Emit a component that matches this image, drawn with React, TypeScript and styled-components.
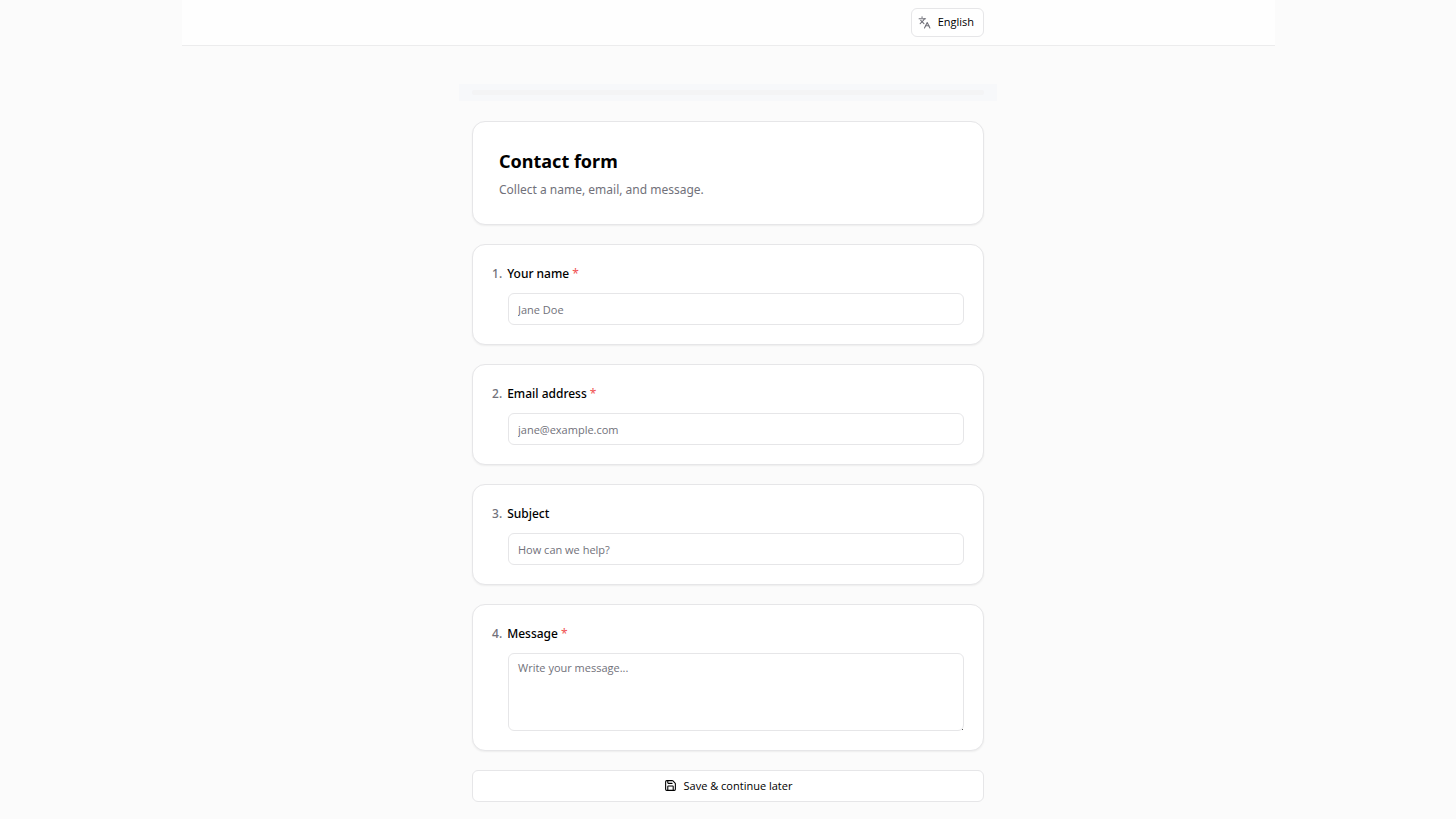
import React from "react";
import styled, { createGlobalStyle } from "styled-components";
import { Languages, Save } from "lucide-react";

const GlobalStyle = createGlobalStyle`
  * { box-sizing: border-box; }
  body {
    margin: 0;
    background: #fbfbfb;
    color: #000;
    font-family: "Segoe UI", "Noto Sans", "Open Sans", sans-serif;
  }
  button, input, textarea { font-family: "Segoe UI", "Open Sans", "Noto Sans", sans-serif; color: inherit; }
`;

const Header = styled.header`
  max-width: 1093px;
  margin: 0 auto;
  padding: 8px 0;
  background: #fefefe;
  border-bottom: 1px solid #ececed;
`;

const HeaderInner = styled.div`
  max-width: 512px;
  margin: 0 auto;
  display: flex;
  justify-content: flex-end;
`;

const LanguageButton = styled.button`
  display: flex;
  align-items: center;
  gap: 7px;
  height: 29px;
  padding: 0 9px 1px 6px;
  border: 1px solid #e6e6e8;
  border-radius: 6px;
  background: #fff;
  font-size: 11px;
  line-height: 16px;

  svg { color: #71717a; }
`;

const Main = styled.main`
  max-width: 538px;
  margin: 0 auto;
  padding: 38px 0 17px;
`;

const ProgressStrip = styled.div`
  padding: 6px 13px;
  background: #f7f8fa;
`;

const ProgressTrack = styled.div`
  height: 5px;
  border-radius: 2px;
  background: #f4f4f5;
`;

const Form = styled.form`
  display: flex;
  flex-direction: column;
  gap: 19px;
  padding: 20px 13px 0;
`;

const Card = styled.section`
  padding: 19px;
  border: 1px solid #e6e6e8;
  border-radius: 13px;
  background: #fff;
  box-shadow: 0 1px 2px rgba(0, 0, 0, 0.06);
`;

const IntroCard = styled(Card)`
  padding: 26px 26px 24px;
`;

const Title = styled.h1`
  margin: 0;
  font-size: 18px;
  line-height: 26px;
  font-weight: 700;
`;

const Description = styled.p`
  margin: 6px 0 0;
  font-size: 12px;
  line-height: 20px;
  color: #71717a;
`;

const Label = styled.label`
  display: flex;
  gap: 5px;
  font-size: 12px;
  line-height: 20px;
  font-weight: 500;
`;

const Num = styled.span`
  color: #71717a;
`;

const Required = styled.span`
  margin-left: 3px;
  color: #f05252;
  font-weight: 400;
`;

const FieldBody = styled.div`
  display: flex;
  margin-top: 9px;
  padding-left: 16px;
`;

const Input = styled.input`
  width: 100%;
  height: 32px;
  padding: 0 9px;
  border: 1px solid #e6e6e8;
  border-radius: 6px;
  background: #fff;
  font-size: 11px;

  &::placeholder { color: #71717a; opacity: 1; }
`;

const TextArea = styled.textarea`
  width: 100%;
  height: 78px;
  padding: 5px 9px;
  border: 1px solid #e6e6e8;
  border-radius: 6px;
  background: #fff;
  font-size: 11px;
  line-height: 18px;
  resize: vertical;

  &::placeholder { color: #71717a; opacity: 1; }
  &::-webkit-resizer {
    background: linear-gradient(#555, #555) right bottom / 1px 1px no-repeat;
  }
`;

const SaveButton = styled.button`
  display: flex;
  align-items: center;
  justify-content: center;
  gap: 7px;
  height: 32px;
  padding: 0 0 1px;
  border: 1px solid #e6e6e8;
  border-radius: 6px;
  background: #fff;
  font-size: 11px;
  line-height: 16px;
  font-weight: 500;
`;

type Question = {
  id: string;
  label: string;
  placeholder: string;
  type: "text" | "email" | "long";
  required?: boolean;
};

const questions: Question[] = [
  { id: "name", label: "Your name", placeholder: "Jane Doe", type: "text", required: true },
  { id: "email", label: "Email address", placeholder: "jane@example.com", type: "email", required: true },
  { id: "subject", label: "Subject", placeholder: "How can we help?", type: "text" },
  { id: "message", label: "Message", placeholder: "Write your message...", type: "long", required: true },
];

function QuestionCard({ question, index }: { question: Question; index: number }) {
  const { id, label, placeholder, type, required } = question;
  return (
    <Card>
      <Label htmlFor={id}>
        <Num>{index}.</Num>
        <span>
          {label}
          {required && <Required>*</Required>}
        </span>
      </Label>
      <FieldBody>
        {type === "long" ? (
          <TextArea id={id} placeholder={placeholder} />
        ) : (
          <Input id={id} type={type} placeholder={placeholder} />
        )}
      </FieldBody>
    </Card>
  );
}

export default function App() {
  return (
    <>
      <GlobalStyle />
      <Header>
        <HeaderInner>
          <LanguageButton type="button">
            <Languages size={13} />
            English
          </LanguageButton>
        </HeaderInner>
      </Header>
      <Main>
        <ProgressStrip>
          <ProgressTrack />
        </ProgressStrip>
        <Form>
          <IntroCard>
            <Title>Contact form</Title>
            <Description>Collect a name, email, and message.</Description>
          </IntroCard>
          {questions.map((question, i) => (
            <QuestionCard key={question.id} question={question} index={i + 1} />
          ))}
          <SaveButton type="button">
            <Save size={13} />
            Save &amp; continue later
          </SaveButton>
        </Form>
      </Main>
    </>
  );
}
